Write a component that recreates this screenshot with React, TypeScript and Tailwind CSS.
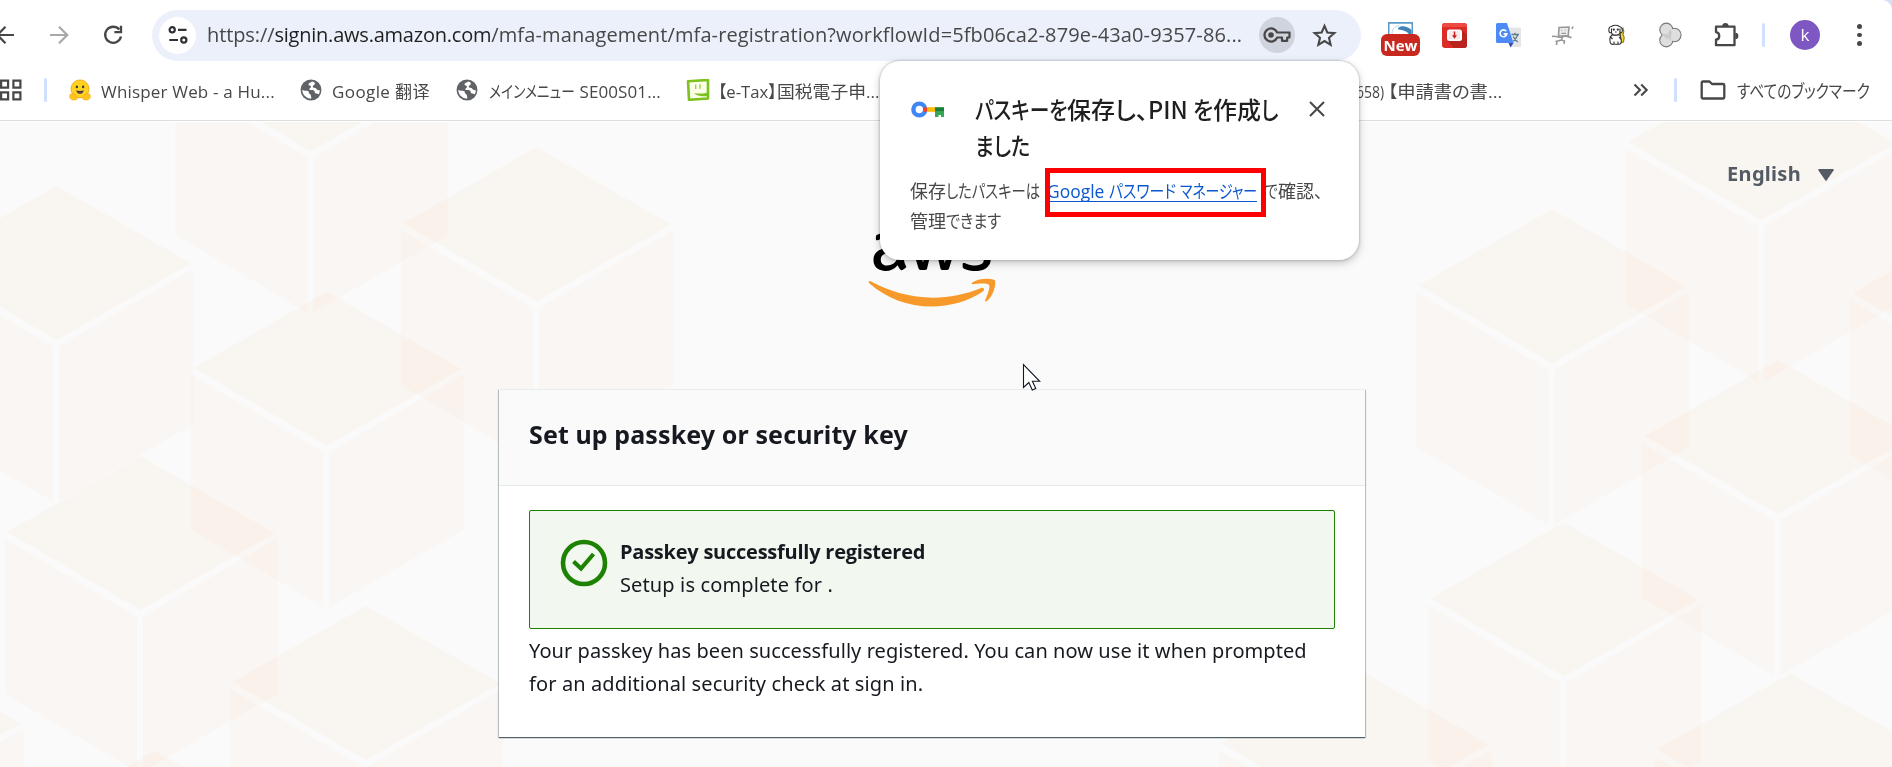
import { useLayoutEffect, useRef, useState, type ReactNode } from "react";
import { FaAws } from "react-icons/fa";

const UI = "font-['Open_Sans','Noto_Sans_CJK_JP',sans-serif]";
const PAGE = "font-['Noto_Sans',sans-serif]";

/* Condenses a run of text to the given advance width. */
function Fit({ w, children }: { w: number; children: ReactNode }) {
  const ref = useRef<HTMLSpanElement>(null);
  const [scale, setScale] = useState(1);
  useLayoutEffect(() => {
    if (ref.current) setScale(w / ref.current.offsetWidth);
  }, [w]);
  return (
    <span className="inline-block whitespace-pre" style={{ width: w }}>
      <span
        ref={ref}
        className="inline-block origin-left whitespace-pre [font-feature-settings:'palt']"
        style={{ transform: `scaleX(${scale})` }}
      >
        {children}
      </span>
    </span>
  );
}

function Globe() {
  return (
    <svg viewBox="0 0 24 24" className="size-[22px] shrink-0">
      <circle cx="12" cy="12" r="11.4" fill="#5f6368" />
      <path d="M2.6 11.800c2 1.600 4.200.7 6 1.300 1.700.6.4 2.700 2 3.200 1.600.4 1.200 2.300 1.800 3.800.3.700-.4 1.400-1.400 1.300C6 20.600 2.200 16.500 2.600 11.800z" fill="#fff" />
      <path d="M13.200 2.600c-1.300 1.100-4 1.200-3.900 3.400 0 1.700 2.300.700 2.700 2.200.3 1.400-2 1.600-1.800 3.100.2 1.700 3.200.9 4.800 1.300 1.700.5.400 2.600 2.100 3.100 1.300.4 2.300.1 3.500.8 1-1.500 1-3 .8-4.500-1.600.5-3-.300-3.800-1.600-.8-1.400-2.900-.2-3.600-1.700-.6-1.500 1.400-1.800 2.100-2.900.6-1 .1-2.500-2.900-3.200z" fill="#fff" />
    </svg>
  );
}

function Hugging() {
  return (
    <svg viewBox="0 0 24 24" className="h-[22px] w-[22px] shrink-0">
      <circle cx="12" cy="10.800" r="9.800" fill="#ffd21e" stroke="#f5a61b" strokeWidth="1" />
      <ellipse cx="8.600" cy="8.600" rx="1.300" ry="1.500" fill="#3a3b45" />
      <ellipse cx="15.400" cy="8.600" rx="1.300" ry="1.500" fill="#3a3b45" />
      <path d="M8 12.200c2.500 1.200 5.500 1.200 8 0-.3 2.600-2 4.200-4 4.200s-3.700-1.600-4-4.200z" fill="#3a3b45" />
      <path d="M10 15.300c1-.9 3-.9 4 0-1 1-3 1-4 0z" fill="#ef4e4e" />
      <path d="M1.200 17c.8-1.500 2.200-.6 3 .3.200-2 1.800-2 2.300-.3l2.300 2.200c1 1.500.2 3.600-2.300 3.600H4c-2.600 0-4.200-3.500-2.800-5.800zM22.800 17c-.8-1.500-2.200-.6-3 .3-.2-2-1.800-2-2.300-.3l-2.300 2.200c-1 1.500-.2 3.600 2.300 3.600H20c2.600 0 4.200-3.500 2.800-5.800z" fill="#ffc51c" stroke="#f7a81b" strokeWidth=".7" />
    </svg>
  );
}

function Divider() {
  return <div className="h-[24px] w-[3px] shrink-0 rounded-full bg-[#d0e0fd]" />;
}

function Toolbar() {
  return (
    <div className="flex h-[70px] shrink-0 items-center">
      <svg viewBox="0 0 15 20" className="h-[20px] w-[15px] shrink-0" fill="none" stroke="#474747" strokeWidth="2.200">
        <path d="M14 10H-2M5.500 1.800L-2.500 10l8 8.200" />
      </svg>
      <svg viewBox="0 0 20 20" className="ml-[34px] size-[20px] shrink-0" fill="none" stroke="#a8a8a8" strokeWidth="2.200">
        <path d="M1 10h16.500M10 1.700l8.300 8.300-8.300 8.300" />
      </svg>
      <svg viewBox="0 0 20 20" className="ml-[34px] size-[20px] shrink-0" fill="none" stroke="#474747" strokeWidth="2.300">
        <path d="M16.300 4.600A8 8 0 1 0 18 11.500" />
        <path d="M18 .8v6.400h-6.600" />
      </svg>

      <div className="ml-[29px] flex h-[51px] w-[1209px] shrink-0 items-center rounded-full bg-[#ecf0fa]">
        <div className="ml-[7px] flex size-[37px] shrink-0 items-center justify-center rounded-full bg-white">
          <svg viewBox="0 0 20 20" className="size-[20px]" fill="none" stroke="#303134" strokeWidth="2.200">
            <circle cx="4.200" cy="4.800" r="2.600" />
            <path d="M10 4.800h8.500M1.300 15H10" />
            <circle cx="15.800" cy="15" r="2.600" />
          </svg>
        </div>
        <div className={`ml-[11px] w-[1047px] shrink-0 whitespace-nowrap text-[20px] leading-[30px] text-[#474747] ${UI}`}>
          <span className="tracking-[-0.1px]">https://</span>
          <span className="tracking-[-0.22px] text-[#1f1f1f]">signin.aws.amazon.com</span>
          <span className="tracking-[0.12px]">/mfa-management/mfa-registration?workflowId=5fb06ca2-879e-43a0-9357-86...</span>
        </div>
        <div className="ml-[5px] flex size-[36px] shrink-0 items-center justify-center rounded-full bg-[#d0d4de]">
          <svg viewBox="0 0 28 18" className="h-[18px] w-[28px]" fill="none" stroke="#474747" strokeWidth="2.200">
            <path d="M14.200 6.500A6.600 6.600 0 1 0 14.200 11.500H19v3.300h5.200v-3.300h2.300v-5z" strokeLinejoin="round" />
            <circle cx="8" cy="9" r="2.800" fill="#474747" stroke="none" />
          </svg>
        </div>
        <svg viewBox="0 0 24 24" className="ml-[17px] size-[25px] shrink-0" fill="none" stroke="#474747" strokeWidth="2">
          <path d="M12 2.800l2.700 6.300 6.800.6-5.200 4.500 1.600 6.700L12 17.300l-5.900 3.600 1.600-6.700-5.200-4.500 6.800-.6z" />
        </svg>
      </div>

      <div className="ml-[20px] flex w-[39px] shrink-0 flex-col items-center pt-[8px]">
        <svg viewBox="0 0 25 13" className="h-[13px] w-[25px]">
          <rect width="25" height="13" fill="#fff" />
          <path d="M0 0h25v1.800H0zM0 0h1.500v13H0zM23.500 0H25v13h-1.500z" fill="#5b9ac8" />
          <path d="M10 6c3-2.800 9-2 13.500 2v4.500H21c-2-3.500-6-4.500-10.500-5z" fill="#3f83b8" />
          <path d="M4 12c0-5 2-7.500 7-8.500" stroke="#b9d5e8" strokeWidth="1" fill="none" />
        </svg>
        <div className={`-mt-[1px] flex h-[22px] w-[39px] items-center justify-center rounded-[6px] bg-[#c8281e] text-[15px] font-bold leading-none text-white ${UI}`}>New</div>
      </div>

      <svg viewBox="0 0 25 25" className="ml-[22px] size-[25px] shrink-0">
        <rect width="25" height="25" rx="3" fill="#dc2c27" />
        <path d="M5 17l7 8h10a3 3 0 0 0 3-3V12l-5.500-5z" fill="#b92320" />
        <path d="M0 3a3 3 0 0 1 3-3h19a3 3 0 0 1 3 3v1H0z" fill="#ee4a42" />
        <rect x="5" y="6.500" width="15" height="11.500" rx="2.500" fill="#fff" />
        <rect x="7" y="8" width="11" height="8.500" rx="1" fill="#f6e9e8" />
        <path d="M12.500 8.500v4.500" stroke="#c41f1f" strokeWidth="1.500" />
        <path d="M10 12.300h5l-2.500 3.500z" fill="#c41f1f" />
      </svg>

      <svg viewBox="0 0 25 25" className="ml-[29px] size-[25px] shrink-0">
        <path d="M10 4.500h13.500A1.500 1.500 0 0 1 25 6v16.500a1.500 1.500 0 0 1-1.500 1.500H14z" fill="#e3e5e6" />
        <path d="M12.500 20h5L14.500 24.500z" fill="#3a4bb0" />
        <path d="M1.500 0H11l6.500 20h-16A1.500 1.500 0 0 1 0 18.500v-17A1.500 1.500 0 0 1 1.500 0z" fill="#4c8bf5" />
        <path d="M10.200 8.300A3.400 3.400 0 1 0 10.800 10.900H7.700" stroke="#fff" strokeWidth="1.600" fill="none" />
        <path d="M15.500 11.500H23M19 9.800v1.700M21.800 11.500c-.8 3-2.500 5-4.500 7M17.200 13.500c1 2 2.800 4 4.600 5.500" stroke="#5f7d8a" strokeWidth="1.300" fill="none" />
      </svg>

      <svg viewBox="0 0 25 25" className="ml-[29px] size-[25px] shrink-0" fill="none" stroke="#979797" strokeWidth="1.600">
        <path d="M9 4.500l10-.5-.8 8.700-9.700.3z" fill="#ececec" />
        <path d="M11.800 7v.8M15.300 6.800v.8M11.500 10.300h4.500" strokeWidth="1.200" />
        <path d="M2 13.500c4-1.500 7 2 10 .5s5-1.500 9.500.8M12.500 13.500l-1 3.500-6 1.500M7 17.500L6.500 22M11.500 17l3 1-.5 3M23 3.500l-1 2.500" />
      </svg>

      <svg viewBox="0 0 20 22" className="ml-[32px] h-[22px] w-[20px] shrink-0" fill="#fff" stroke="#333" strokeWidth="1.100">
        <path d="M14 5l2-.8.8 3.300-.8 3 1.200 3-.7 4.500-3 .5-.5-4z" fill="#f0d43a" stroke="#8a7a18" />
        <path d="M5 11c-2 2-2.500 5-1.800 7.300.3 1.500 1.800 2.400 3.300 2h6c1.700-.5 2-2.500 1.700-4.800L13 11z" />
        <path d="M4.500 2.500C2 2.500 1.500 5 2 7.500c.4 1.500 1.600 1.500 2.400.8C5 12 12.500 12 13 8.300c1 .7 2 .5 2.200-.8.4-2.500-.5-4.500-2.800-5C10.300.8 6.500.8 4.500 2.500z" />
        <circle cx="6.800" cy="5.600" r=".6" fill="#222" />
        <circle cx="10.800" cy="5.600" r=".6" fill="#222" />
        <path d="M8 8h1.600M4.500 4.500v3.500M13 4.500v3.500M3 12.500l2.500 2.500M12 13l2 2.500M7 20v-2.500M11 20v-2.500" />
      </svg>

      <svg viewBox="0 0 24 26" className="ml-[31px] h-[26px] w-[24px] shrink-0">
        <g fill="#777" stroke="#777" strokeWidth="2.200">
          <circle cx="8.300" cy="7.700" r="6" />
          <circle cx="8.300" cy="18.300" r="6" />
          <circle cx="16.300" cy="13" r="6.200" />
        </g>
        <g fill="#dedede">
          <circle cx="8.300" cy="7.700" r="6" />
          <circle cx="8.300" cy="18.300" r="6" />
          <circle cx="16.300" cy="13" r="6.200" />
        </g>
        <path d="M3.500 13c2-1.500 4.500-1.200 7 0l-1 5c-1-2-3.500-4-6-5zM9.500 13l2.500-6c1.500 1 2 3.500 1.500 5.500s0 4-1.500 6.500z" fill="#cacaca" />
      </svg>

      <svg viewBox="0 0 26 26" className="ml-[31px] size-[26px] shrink-0" fill="none" stroke="#474747" strokeWidth="2.300">
        <path d="M3 4.700h18.500v18.500H3v-5.500c4.300-.6 4.300-7 0-7.600z" strokeLinejoin="round" />
        <path d="M9.300 4a3.100 3.100 0 0 1 6.200 0zM22.300 10.800a3.100 3.100 0 0 1 0 6.200z" fill="#474747" stroke="none" />
      </svg>

      <div className="ml-[23px] flex"><Divider /></div>
      <div className={`ml-[25px] flex size-[30px] shrink-0 items-center justify-center rounded-full bg-[#7e57c2] pb-[1px] text-[17px] leading-none text-white ${UI}`}>k</div>
      <div className="ml-[37px] flex shrink-0 flex-col gap-[4px]">
        <div className="size-[4.500px] rounded-full bg-[#474747]" />
        <div className="size-[4.500px] rounded-full bg-[#474747]" />
        <div className="size-[4.500px] rounded-full bg-[#474747]" />
      </div>
    </div>
  );
}

function Bookmarks() {
  return (
    <div className={`flex h-[40px] shrink-0 items-center whitespace-nowrap text-[17px] leading-[26px] text-[#474747] ${UI}`}>
      <svg viewBox="0 0 22 22" className="h-[22px] w-[22px] shrink-0" fill="none" stroke="#474747" strokeWidth="2.200">
        <path d="M1.100 1.600h7v7h-7zM13.400 1.600h7v7h-7zM1.100 13.400h7v7h-7zM13.400 13.400h7v7h-7z" />
      </svg>
      <div className="ml-[22px] flex"><Divider /></div>
      <div className="ml-[22px] flex items-center gap-[10px]">
        <Hugging />
        <span className="w-[174px] pt-[3px] tracking-[0.18px]">Whisper Web - a Hu...</span>
      </div>
      <div className="ml-[25px] flex items-center gap-[10px]">
        <Globe />
        <span className="w-[101px] pt-[3px] font-['Open_Sans','Noto_Sans_CJK_SC',sans-serif] tracking-[0.4px]">Google 翻译</span>
      </div>
      <div className="ml-[23px] flex items-center gap-[11px]">
        <Globe />
        <span className="w-[172px] pt-[3px] tracking-[0.1px]"><Fit w={86}>メインメニュー</Fit> SE00S01...</span>
      </div>
      <div className="ml-[25px] flex items-center gap-[8px]">
        <svg viewBox="0 0 24 22" className="h-[22px] w-[24px] shrink-0">
          <path d="M2 2.200L22 1v18.500L3 20.800z" fill="#fbffe8" stroke="#7cc11f" strokeWidth="2.600" strokeLinejoin="round" />
          <path d="M9.700 5.500v4.500M14 5.200v4.500" stroke="#9acb52" strokeWidth="1.400" />
          <path d="M8 14.300c4 .5 9 .3 13.500-.6v3.300c-5 .6-10 .4-13.500-2.700z" fill="#7cc11f" />
        </svg>
        <span className="w-[638px] overflow-hidden pt-[3px]">
          <Fit w={59}>【e-Tax】</Fit><Fit w={89}>国税電子申</Fit>...
        </span>
      </div>
      <div className="flex w-[143px] justify-end pt-[3px]">
        <Fit w={32}>658) </Fit>
        <Fit w={114}>【申請書の書...</Fit>
      </div>
      <svg viewBox="0 0 16 14" className="ml-[134px] h-[14px] w-[16px] shrink-0" fill="none" stroke="#474747" strokeWidth="2.100">
        <path d="M1.500 1.500L7 7l-5.500 5.500M8.200 1.500L13.700 7l-5.500 5.500" />
      </svg>
      <div className="ml-[25px] flex"><Divider /></div>
      <svg viewBox="0 0 26 20" className="ml-[23px] h-[20px] w-[26px] shrink-0" fill="none" stroke="#474747" strokeWidth="2.300">
        <path d="M1.700 2.800A1.300 1.300 0 0 1 3 1.500h6.500L12 4h11a1.300 1.300 0 0 1 1.300 1.300v11.900a1.300 1.300 0 0 1-1.300 1.300H3a1.300 1.300 0 0 1-1.300-1.300z" strokeLinejoin="round" />
      </svg>
      <span className="ml-[11px] pt-[1px] text-[18px]"><Fit w={133}>すべてのブックマーク</Fit></span>
    </div>
  );
}

const CUBES: [number, number][] = [
  [56.500, 64], [311, -125], [536.700, 25.300], [326.700, 169.700], [140.400, 334], [365.700, 484], [155, 628.700], [-113.500, 524],
  [1761.300, -56], [1552, 87.300], [1777.700, 238], [1985.500, 95], [1563.800, 400.300], [1790.300, 551.300], [1354.400, 545],
];

function Cubes() {
  return (
    <svg viewBox="0 0 1892 645" className="absolute inset-0 h-[645px] w-[1892px] bg-[#fafafa]">
      {CUBES.map(([x, y]) => (
        <g key={`${x},${y}`} transform={`translate(${x} ${y})`} className="mix-blend-multiply">
          <path d="M0 0L134.500 77.300 0 154-133 76z" fill="#fefaf6" />
          <path d="M-3.500 160.500V315.500L-135.500 238V83zM2.500 160.500L137 82.500V238L2.500 315.500z" fill="#fffbf8" />
        </g>
      ))}
    </svg>
  );
}

function AwsLogo() {
  return (
    <div className="relative h-[75px] w-[128px]">
      <FaAws viewBox="0 64 640 384" className="absolute inset-0 h-[75px] w-[128px] text-black [clip-path:inset(0_0_40%_0)]" preserveAspectRatio="none" />
      <svg viewBox="0 0 304 182" preserveAspectRatio="none" className="absolute inset-0 h-[75px] w-[128px]" fill="#f79a2b">
        <path d="M273.500 143.700c-32.900 24.300-80.700 37.200-121.800 37.200-57.600 0-109.500-21.300-148.700-56.700-3.100-2.800-.3-6.600 3.400-4.400 42.400 24.600 94.700 39.500 148.800 39.500 36.500 0 76.600-7.600 113.500-23.200 5.500-2.500 10.200 3.600 4.800 7.600z" />
        <path d="M287.200 128.100c-4.200-5.400-27.800-2.600-38.500-1.300-3.200.4-3.700-2.400-.8-4.500 18.800-13.200 49.700-9.400 53.300-5 3.600 4.500-1 35.400-18.600 50.200-2.700 2.300-5.300 1.100-4.100-1.900 4-9.900 12.900-32.200 8.700-37.500z" />
      </svg>
    </div>
  );
}

function Card() {
  return (
    <section className="w-[866px] border-t border-[#eaeded] bg-white shadow-[0_1px_1px_0_rgba(0,28,36,0.5),1px_1px_1px_0_rgba(0,28,36,0.2),-1px_1px_1px_0_rgba(0,28,36,0.2)]">
      <header className="flex h-[96px] items-center border-b border-[#e8eaea] bg-[#fafafa] px-[30px] pb-[7px]">
        <h1 className="text-[25px] font-bold leading-[34px] tracking-[0.11px] text-[#16191f]">Set up passkey or security key</h1>
      </header>
      <div className="h-[251px] px-[30px] pt-[24px] text-[20px] leading-[33px] text-[#16191f]">
        <div className="flex h-[119px] w-[806px] gap-[12px] rounded-[2px] border border-[#1d8102] bg-[#f2f7f0] pl-[30px] pt-[24px]">
          <svg viewBox="0 0 48 48" className="mt-[4px] size-[48px] shrink-0" fill="none" stroke="#1d8102">
            <circle cx="24" cy="24" r="21" strokeWidth="4.600" />
            <path d="M13.500 22.500l7.500 7 12.500-14.500" strokeWidth="4.200" />
          </svg>
          <div>
            <div className="font-['Open_Sans',sans-serif] font-bold tracking-[-0.24px]">Passkey successfully registered</div>
            <div className="tracking-[0.13px]">Setup is complete for .</div>
          </div>
        </div>
        <p className="whitespace-nowrap pt-[5px] tracking-[0.07px]">
          Your passkey has been successfully registered. You can now use it when prompted
          <br />
          <span className="tracking-[0.11px]">for an additional security check at sign in.</span>
        </p>
      </div>
    </section>
  );
}

function Popup() {
  return (
    <div className={`absolute left-[880px] top-[61px] h-[199px] w-[479px] rounded-[20px] bg-white shadow-[0_0_2px_1px_rgba(0,0,0,0.14),0_3px_8px_0_rgba(0,0,0,0.22)] ${UI}`}>
      <div className="flex pl-[31px] pt-[30px]">
        <svg viewBox="0 0 33 17" className="mt-[10px] h-[17px] w-[33px] shrink-0">
          <circle cx="8.300" cy="8.500" r="5.900" fill="none" stroke="#4285f4" strokeWidth="4.400" />
          <path d="M12.200 6.200h4.300v4.600h-4.300a5 5 0 0 0 0-4.600z" fill="#ea4335" />
          <path d="M16.500 6.200h7.500v4.600h-7.500z" fill="#fbbc04" />
          <path d="M24 6.200h9v4.600h-9z" fill="#188038" />
          <path d="M24 10.800h9V16h-3v-2h-2.500v2H24z" fill="#34a853" />
        </svg>
        <h2 className="ml-[31px] w-[303px] whitespace-nowrap font-['Noto_Sans_CJK_JP',sans-serif] text-[24px] font-medium leading-[36px] text-[#1f1f1f]">
          <div className="flex">
            <Fit w={92}>パスキーを</Fit>
            <Fit w={48}>保存</Fit>
            <Fit w={33}>し、</Fit>
            <Fit w={45}>PIN </Fit>
            <Fit w={20}>を</Fit>
            <Fit w={48}>作成</Fit>
            <Fit w={17}>し</Fit>
          </div>
          <Fit w={55}>ました</Fit>
        </h2>
        <svg viewBox="0 0 16 16" className="ml-[31px] mt-[10px] size-[16px] shrink-0" stroke="#474747" strokeWidth="2">
          <path d="M1 1l14 14M15 1L1 15" />
        </svg>
      </div>
      <div className="whitespace-nowrap pl-[30px] pt-[13px] text-[18px] leading-[30px] text-[#474747]">
        <div className="flex">
          <Fit w={36}>保存</Fit>
          <Fit w={94}>したパスキーは</Fit>
          <span className="relative ml-[7px] flex text-[#0b57d0]">
            <Fit w={62}>Google </Fit>
            <Fit w={71}>パスワード </Fit>
            <Fit w={77}>マネージャー</Fit>
            <span className="absolute bottom-[4px] left-0 h-[1px] w-[210px] bg-[#0b57d0]" />
            <span className="absolute -left-[2px] -top-[8px] h-[49px] w-[221px] border-[5px] border-[#ff0000]" />
          </span>
          <span className="ml-[8px] flex">
            <Fit w={13}>で</Fit>
            <Fit w={36}>確認</Fit>
            <Fit w={9}>、</Fit>
          </span>
        </div>
        <div className="flex">
          <Fit w={36}>管理</Fit>
          <Fit w={55}>できます</Fit>
        </div>
      </div>
    </div>
  );
}

export default function App() {
  return (
    <div className="relative flex h-[767px] w-[1892px] flex-col overflow-hidden bg-[#d3e1fb]">
      <div className="flex h-[122px] shrink-0 flex-col rounded-tr-[10px] bg-white">
        <Toolbar />
        <div className="flex h-[51px] shrink-0 flex-col border-b border-[#dedede]">
          <Bookmarks />
        </div>
      </div>

      <main className={`relative h-[645px] overflow-hidden bg-[#fafafa] ${PAGE}`}>
        <Cubes />
        <div className="relative flex h-[110px] items-start justify-end gap-[17px] pr-[58px] pt-[36px]">
          <span className="text-[20px] font-bold leading-[32px] tracking-[0.3px] text-[#545b64]">English</span>
          <svg viewBox="0 0 16 12" className="mt-[11px] h-[12px] w-[16px]" fill="#545b64">
            <path d="M1 0h14a.8.8 0 0 1 .7 1.200L8.600 11.600a.8.8 0 0 1-1.200 0L.3 1.200A.8.8 0 0 1 1 0z" />
          </svg>
        </div>
        <div className="relative flex h-[157px] items-start pl-[868px]">
          <AwsLogo />
        </div>
        <div className="relative flex pl-[499px]">
          <Card />
        </div>
      </main>

      <Popup />

      <svg viewBox="0 0 19 28" className="absolute left-[1022px] top-[363px] h-[28px] w-[19px]">
        <path d="M1.500 1.500v23l5.300-5 3.500 7.500 3.500-1.500-3.400-7.200h7.300z" fill="#fff" stroke="#111827" strokeWidth="1.100" />
      </svg>
    </div>
  );
}
